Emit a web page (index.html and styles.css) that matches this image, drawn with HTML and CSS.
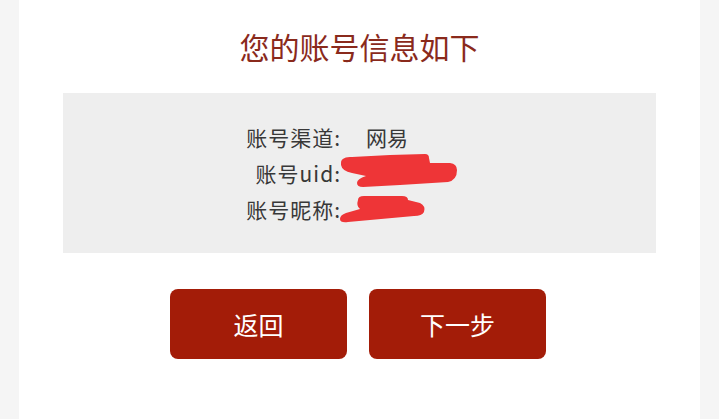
FILE: index.html
```html
<!DOCTYPE html>
<html lang="zh">
<head>
<meta charset="utf-8">
<title>账号信息</title>
<link rel="stylesheet" href="styles.css">
</head>
<body>
<div class="card">
  <h1 class="title">您的账号信息如下</h1>
  <div class="info">
    <div class="rows">
      <div class="label">账号渠道:</div>
      <div class="value"><span class="channel">网易</span></div>
      <div class="label">账号uid:</div>
      <div class="value">
        <svg class="redact r1" width="124" height="40" viewBox="0 0 124 40">
          <path fill="#ee3537" d="M3 10 C3 5 8 4 14 4 L52 2 L87 1 Q91 1 91 5 L92 10 L112 10 Q119 11 119 17 Q119 27 110 29 L62 32 L25 34 Q19 34 19 30 Q19 26 28 23 L14 20 Q4 18 3 12 Z"/>
        </svg>
      </div>
      <div class="label">账号昵称:</div>
      <div class="value">
        <svg class="redact r2" width="96" height="34" viewBox="0 0 96 34">
          <path fill="#ee3537" d="M22 8 Q22 4 28 4 L66 4 Q72 4 72 8 L84 11 Q90 14 88 20 Q86 24 78 24 L12 30 Q4 31 4 27 Q4 23 10 21 L24 17 Q20 14 22 8 Z"/>
        </svg>
      </div>
    </div>
  </div>
  <div class="actions">
    <button class="btn">返回</button>
    <button class="btn">下一步</button>
  </div>
</div>
</body>
</html>
```
FILE: styles.css
```css
html, body {
  margin: 0;
  padding: 0;
  background: #f5f5f5;
  height: 100%;
}
body {
  font-family: "Noto Sans CJK SC", "Noto Sans", sans-serif;
  overflow: hidden;
}
.card {
  margin: 0 19px;
  width: 681px;
  height: 419px;
  background: #ffffff;
  box-sizing: border-box;
  padding: 0 44px;
}
.title {
  margin: 0;
  height: 93px;
  line-height: 93px;
  text-align: center;
  font-size: 30px;
  font-weight: 400;
  color: #8a2a1c;
}
.info {
  height: 160px;
  background: #eeeeee;
  display: flex;
  align-items: center;
}
.rows {
  display: grid;
  grid-template-columns: 278px 1fr;
  width: 100%;
  font-size: 21px;
  line-height: 36px;
  color: #383838;
}
.label {
  text-align: right;
  letter-spacing: 1px;
}
.value {
  position: relative;
}
.channel {
  padding-left: 25px;
}
.redact {
  position: absolute;
  display: block;
}
.r1 {
  left: -3px;
  top: -2px;
}
.r2 {
  left: -5px;
  top: 1px;
}
.actions {
  margin-top: 36px;
  padding-right: 3px;
  display: flex;
  justify-content: center;
  gap: 22px;
}
.btn {
  width: 177px;
  height: 70px;
  border: none;
  border-radius: 8px;
  background: #a31c08;
  color: #ffffff;
  font-family: "Noto Sans CJK SC", "Noto Sans", sans-serif;
  font-size: 25px;
  padding: 0;
}
```
